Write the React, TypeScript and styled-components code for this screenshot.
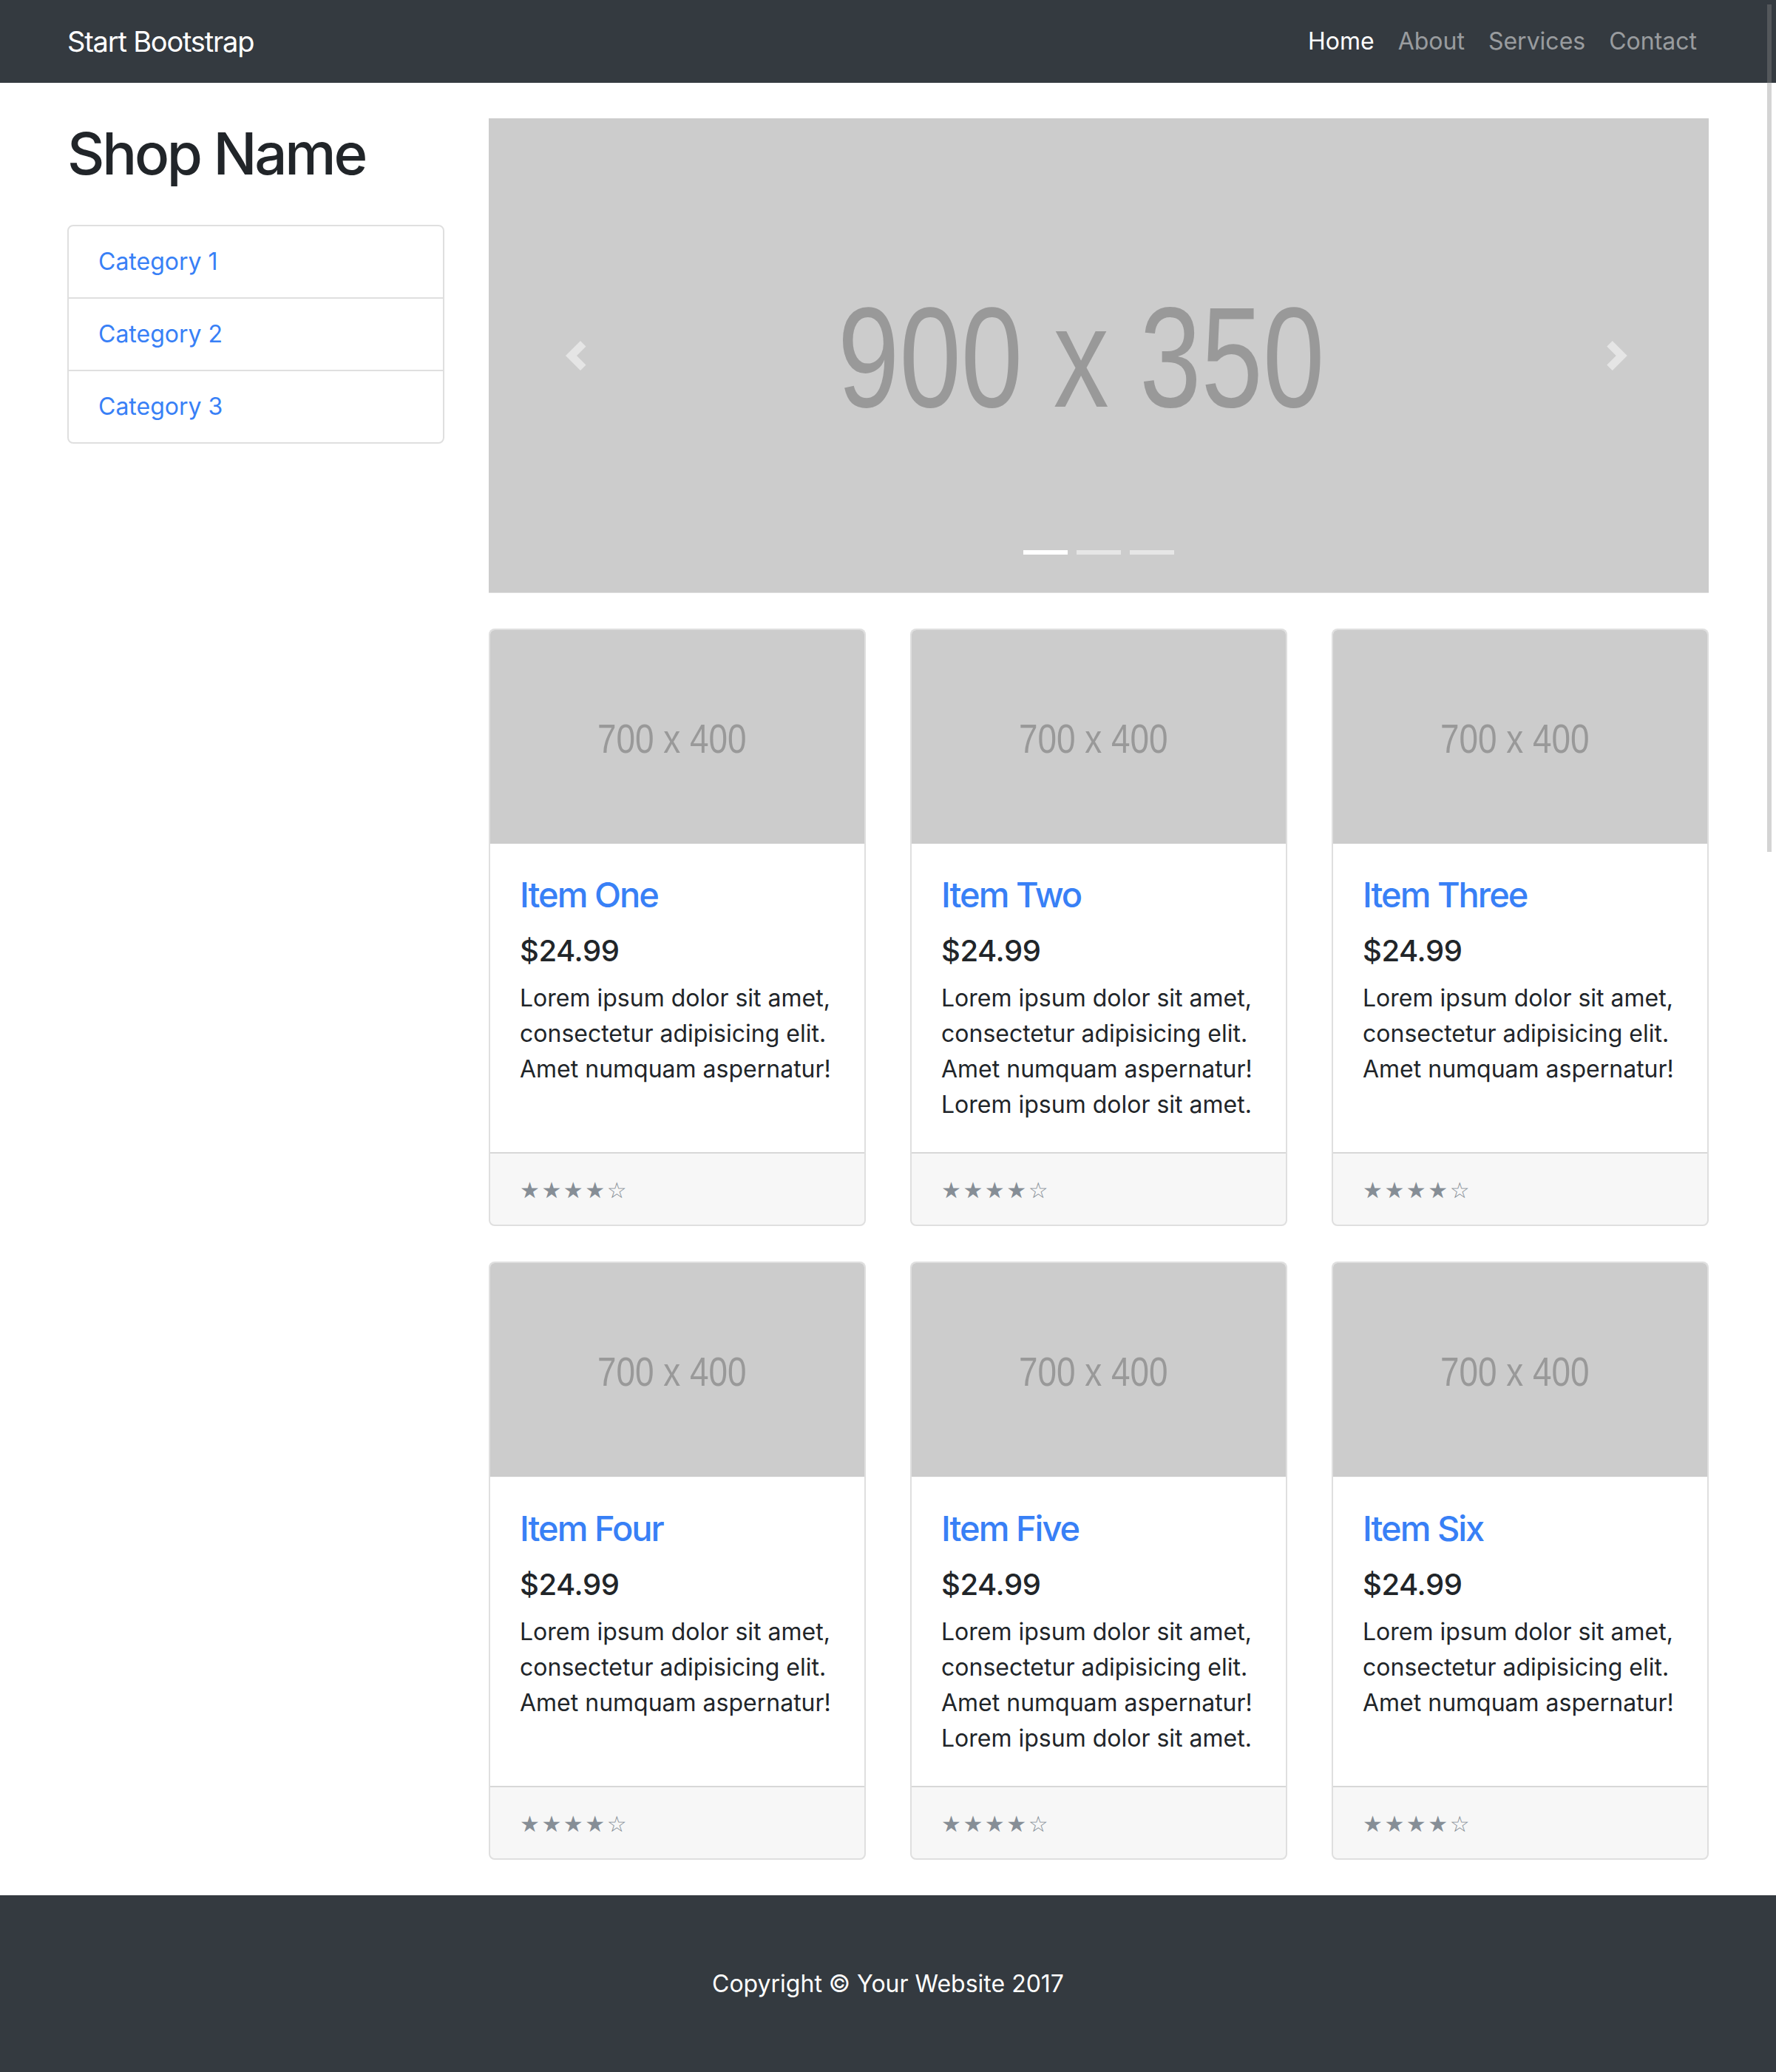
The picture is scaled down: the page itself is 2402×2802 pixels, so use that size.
import React from 'react';
import styled, { createGlobalStyle } from 'styled-components';

const BLUE = '#3880f6';
const DARK = '#343a40';

const GlobalStyle = createGlobalStyle`
  html { scrollbar-width: none; }
  html::-webkit-scrollbar, body::-webkit-scrollbar { display: none; width: 0; }
  *, *::before, *::after { box-sizing: border-box; }
  body {
    margin: 0;
    font-family: Inter, "Noto Sans", "Liberation Sans", sans-serif;
    font-size: 32px;
    line-height: 1.5;
    color: #212529;
    background: #fff;
  }
`;

const Page = styled.div`
  position: relative;
  min-height: 100vh;
`;

const Container = styled.div`
  width: 100%;
  max-width: 2280px;
  margin: 0 auto;
  padding: 0 30px;
`;

const NavBar = styled.nav`
  background: ${DARK};
  padding: 16px 0;
`;

const NavInner = styled(Container)`
  display: flex;
  align-items: center;
  justify-content: space-between;
`;

const Brand = styled.a`
  font-size: 38px;
  line-height: 60px;
  padding: 10px 0;
  color: #fff;
  text-decoration: none;
  letter-spacing: -1.2px;
`;

const NavList = styled.ul`
  display: flex;
  list-style: none;
  margin: 0;
  padding: 0;
`;

const NavLink = styled.a<{ $active?: boolean }>`
  display: block;
  padding: 16px;
  line-height: 48px;
  font-size: 32px;
  text-decoration: none;
  color: ${(p) => (p.$active ? '#fff' : 'rgba(255,255,255,0.5)')};
`;

const Row = styled.div`
  display: flex;
  align-items: flex-start;
  margin: 0 -30px;
`;

const Sidebar = styled.aside`
  flex: 0 0 25%;
  max-width: 25%;
  padding: 0 30px;
`;

const Content = styled.main`
  flex: 0 0 75%;
  max-width: 75%;
  padding: 0 30px;
`;

const ShopTitle = styled.h1`
  font-size: 78px;
  line-height: 96px;
  font-weight: 500;
  margin: 48px 0;
  letter-spacing: -3.2px;
`;

const ListGroup = styled.div`
  display: flex;
  flex-direction: column;
  border: 2px solid rgba(0, 0, 0, 0.125);
  border-radius: 8px;
`;

const ListItem = styled.a`
  display: block;
  padding: 24px 40px;
  line-height: 48px;
  font-size: 32px;
  color: ${BLUE};
  text-decoration: none;
  & + & {
    border-top: 2px solid rgba(0, 0, 0, 0.125);
  }
`;

const Carousel = styled.div`
  position: relative;
  margin: 48px 0;
`;

const Slide = styled.svg`
  display: block;
  width: 100%;
  height: auto;
`;

const Control = styled.a<{ $side: 'left' | 'right' }>`
  position: absolute;
  top: 0;
  bottom: 0;
  ${(p) => p.$side}: 0;
  width: 15%;
  display: flex;
  align-items: center;
  justify-content: center;
  opacity: 0.5;
`;

const Indicators = styled.ol`
  position: absolute;
  left: 15%;
  right: 15%;
  bottom: 20px;
  display: flex;
  justify-content: center;
  list-style: none;
  padding: 0;
  margin: 0 0 32px;
`;

const Indicator = styled.li<{ $active?: boolean }>`
  width: 60px;
  height: 6px;
  margin: 0 6px;
  background: ${(p) => (p.$active ? '#fff' : 'rgba(255,255,255,0.5)')};
`;

const CardGrid = styled.div`
  display: grid;
  grid-template-columns: repeat(3, 1fr);
  column-gap: 60px;
  row-gap: 48px;
  margin-bottom: 48px;
`;

const Card = styled.div`
  display: flex;
  flex-direction: column;
  border: 2px solid rgba(0, 0, 0, 0.125);
  border-radius: 8px;
  overflow: hidden;
  background: #fff;
`;

const CardImage = styled.svg`
  display: block;
  width: 100%;
  height: auto;
`;

const CardBody = styled.div`
  flex: 1 1 auto;
  padding: 40px;
`;

const CardTitle = styled.h4`
  font-size: 47px;
  line-height: 57.6px;
  font-weight: 500;
  margin: 0 0 24px;
  letter-spacing: -2px;
  a {
    color: ${BLUE};
    text-decoration: none;
  }
`;

const Price = styled.h5`
  font-size: 40px;
  line-height: 48px;
  font-weight: 500;
  margin: 0 0 16px;
  letter-spacing: -0.4px;
`;

const CardText = styled.p`
  margin: 0;
  font-size: 32px;
  line-height: 48px;
`;

const CardFooter = styled.div`
  padding: 24px 40px;
  background: rgba(0, 0, 0, 0.03);
  border-top: 2px solid rgba(0, 0, 0, 0.125);
`;

const Stars = styled.small`
  display: block;
  height: 48px;
  line-height: 52px;
  font-family: "DejaVu Sans", sans-serif;
  font-size: 30px;
  letter-spacing: -3.5px;
  color: #868e96;
`;

const Footer = styled.footer`
  background: ${DARK};
  padding: 96px 0;
`;

const Copyright = styled.p`
  margin: 0;
  text-align: center;
  color: #fff;
  font-size: 32px;
  line-height: 48px;
`;

const ScrollThumb = styled.div`
  position: absolute;
  top: 6px;
  right: 6px;
  width: 6px;
  height: 1146px;
  background: rgba(139, 139, 139, 0.37);
`;

const Placeholder: React.FC<{
  w: number;
  h: number;
  label: string;
  fontSize: number;
  textLength: number;
  cx: number;
  baseline: number;
  as?: 'slide' | 'card';
}> = ({ w, h, label, fontSize, textLength, cx, baseline, as }) => {
  const Comp = as === 'slide' ? Slide : CardImage;
  return (
    <Comp viewBox={`0 0 ${w} ${h}`} xmlns="http://www.w3.org/2000/svg">
      <rect width={w} height={h} fill="#cccccc" />
      <text
        x={cx}
        y={baseline}
        fill="#999999"
        fontFamily="'Liberation Sans', Arial, sans-serif"
        fontSize={fontSize}
        textAnchor="middle"
        textLength={textLength}
        lengthAdjust="spacingAndGlyphs"
      >
        {label}
      </text>
    </Comp>
  );
};

const PrevIcon = () => (
  <svg width="40" height="40" viewBox="0 0 8 8" xmlns="http://www.w3.org/2000/svg">
    <path fill="#fff" d="M4 0l-4 4 4 4 1.5-1.5-2.5-2.5 2.5-2.5-1.5-1.5z" />
  </svg>
);

const NextIcon = () => (
  <svg width="40" height="40" viewBox="0 0 8 8" xmlns="http://www.w3.org/2000/svg">
    <path fill="#fff" d="M2.75 0l-1.5 1.5 2.5 2.5-2.5 2.5 1.5 1.5 4-4-4-4z" />
  </svg>
);

const SHORT = 'Lorem ipsum dolor sit amet, consectetur adipisicing elit. Amet numquam aspernatur!';
const LONG = SHORT + ' Lorem ipsum dolor sit amet.';

const items = [
  { title: 'Item One', text: SHORT },
  { title: 'Item Two', text: LONG },
  { title: 'Item Three', text: SHORT },
  { title: 'Item Four', text: SHORT },
  { title: 'Item Five', text: LONG },
  { title: 'Item Six', text: SHORT },
];

export default function App() {
  return (
    <Page>
      <GlobalStyle />
      <NavBar>
        <NavInner>
          <Brand href="#">Start Bootstrap</Brand>
          <NavList>
            <li><NavLink href="#" $active>Home</NavLink></li>
            <li><NavLink href="#">About</NavLink></li>
            <li><NavLink href="#">Services</NavLink></li>
            <li><NavLink href="#">Contact</NavLink></li>
          </NavList>
        </NavInner>
      </NavBar>

      <Container>
        <Row>
          <Sidebar>
            <ShopTitle>Shop Name</ShopTitle>
            <ListGroup>
              <ListItem href="#">Category 1</ListItem>
              <ListItem href="#">Category 2</ListItem>
              <ListItem href="#">Category 3</ListItem>
            </ListGroup>
          </Sidebar>

          <Content>
            <Carousel>
              <Placeholder
                as="slide"
                w={900}
                h={350}
                label="900 x 350"
                fontSize={105}
                textLength={359}
                cx={437}
                baseline={213}
              />
              <Control $side="left" href="#"><PrevIcon /></Control>
              <Control $side="right" href="#"><NextIcon /></Control>
              <Indicators>
                <Indicator $active />
                <Indicator />
                <Indicator />
              </Indicators>
            </Carousel>

            <CardGrid>
              {items.map((it) => (
                <Card key={it.title}>
                  <Placeholder
                    w={700}
                    h={400}
                    label="700 x 400"
                    fontSize={77}
                    textLength={279}
                    cx={340}
                    baseline={229}
                  />
                  <CardBody>
                    <CardTitle><a href="#">{it.title}</a></CardTitle>
                    <Price>$24.99</Price>
                    <CardText>{it.text}</CardText>
                  </CardBody>
                  <CardFooter>
                    <Stars>&#9733; &#9733; &#9733; &#9733; &#9734;</Stars>
                  </CardFooter>
                </Card>
              ))}
            </CardGrid>
          </Content>
        </Row>
      </Container>

      <Footer>
        <Container>
          <Copyright>Copyright &copy; Your Website 2017</Copyright>
        </Container>
      </Footer>
      <ScrollThumb />
    </Page>
  );
}
